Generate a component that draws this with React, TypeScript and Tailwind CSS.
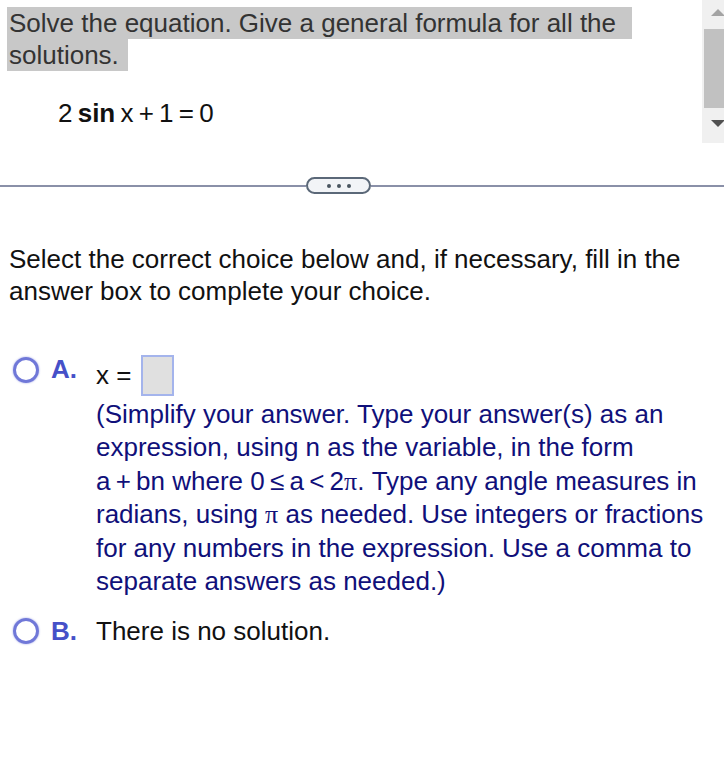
import React from "react";

const Radio = () => (
  <div className="w-[26px] h-[26px] rounded-full border-[3px] border-[#7078d8] shadow-[0_0_2px_rgba(111,119,218,0.7)] shrink-0" />
);

const Pi = () => <span style={{ fontFamily: '"Liberation Serif", serif' }}>π</span>;

export default function App() {
  return (
    <div
      className="relative w-[724px] h-[764px] bg-white overflow-hidden text-[26px]"
      style={{ fontFamily: '"Liberation Sans", Arial, sans-serif' }}
    >
      {/* scrollbar */}
      <div className="absolute right-0 top-0 w-[22px] h-[143px] bg-[#f0f0f0]">
        <div className="absolute left-[9px] top-[9px] w-0 h-0 border-l-[7px] border-r-[7px] border-b-[7px] border-l-transparent border-r-transparent border-b-[#a3a3a3]" />
        <div className="absolute left-[2px] top-[29px] w-[20px] h-[79px] bg-[#c1c1c1]" />
        <div className="absolute left-[9px] top-[120px] w-0 h-0 border-l-[7px] border-r-[7px] border-t-[7px] border-l-transparent border-r-transparent border-t-[#505050]" />
      </div>

      {/* title */}
      <div className="pt-[7px] pl-[7px] text-[#333333] leading-[32px]">
        <div className="w-fit bg-[#c8c8c8] pl-[2px] pr-[16px] whitespace-pre">Solve the equation. Give a general formula for all the</div>
        <div className="w-fit bg-[#c8c8c8] pl-[2px] pr-[9px]">solutions.</div>
      </div>

      {/* equation */}
      <div className="mt-[26px] pl-[58px] leading-[32px] text-[#111] [word-spacing:-2px]">
        2 <span className="font-bold">sin</span> x + 1 = 0
      </div>

      {/* divider */}
      <div className="mt-[48px] flex items-center h-[17px]">
        <div className="flex-1 h-[2px] bg-[#8a90a8]" />
        <div className="w-[65px] h-[17px] rounded-full border-2 border-[#5b6878] bg-[#f2f4f7] flex items-center justify-center gap-[6px]">
          <div className="w-[4px] h-[4px] rounded-full bg-[#4a5560]" />
          <div className="w-[4px] h-[4px] rounded-full bg-[#4a5560]" />
          <div className="w-[4px] h-[4px] rounded-full bg-[#4a5560]" />
        </div>
        <div className="w-[353px] h-[2px] bg-[#8a90a8]" />
      </div>

      {/* instructions */}
      <div className="mt-[49px] pl-[9px] leading-[32px] text-[#111]">
        <div>Select the correct choice below and, if necessary, fill in the</div>
        <div>answer box to complete your choice.</div>
      </div>

      {/* option A */}
      <div className="mt-[48px] flex items-start pl-[13px]">
        <div className="mt-[2px]"><Radio /></div>
        <div className="ml-[12px] w-[45px] font-bold text-[#4650c8] leading-[28px]">A.</div>
        <div className="flex flex-col">
          <div className="flex items-start">
            <span className="mt-[6px] leading-[28px] text-[#111]">x =</span>
            <div className="ml-[10px] w-[33px] h-[41px] border-2 border-[#a4b4ec] bg-[#e0e0e0]" />
          </div>
          <div className="mt-[2px] leading-[33.4px] text-[#10107a]">
            <div>(Simplify your answer. Type your answer(s) as an</div>
            <div>expression, using n as the variable, in the form</div>
            <div>
              <span className="[word-spacing:-2px]">a + bn</span> where{" "}
              <span className="[word-spacing:-2px]">0 ≤ a &lt; 2<Pi />.</span> Type any angle measures in
            </div>
            <div>radians, using <Pi /> as needed. Use integers or fractions</div>
            <div>for any numbers in the expression. Use a comma to</div>
            <div>separate answers as needed.)</div>
          </div>
        </div>
      </div>

      {/* option B */}
      <div className="mt-[19px] flex items-center pl-[13px]">
        <Radio />
        <div className="ml-[12px] w-[45px] font-bold text-[#4650c8] leading-[28px]">B.</div>
        <div className="leading-[28px] text-[#111]">There is no solution.</div>
      </div>
    </div>
  );
}
